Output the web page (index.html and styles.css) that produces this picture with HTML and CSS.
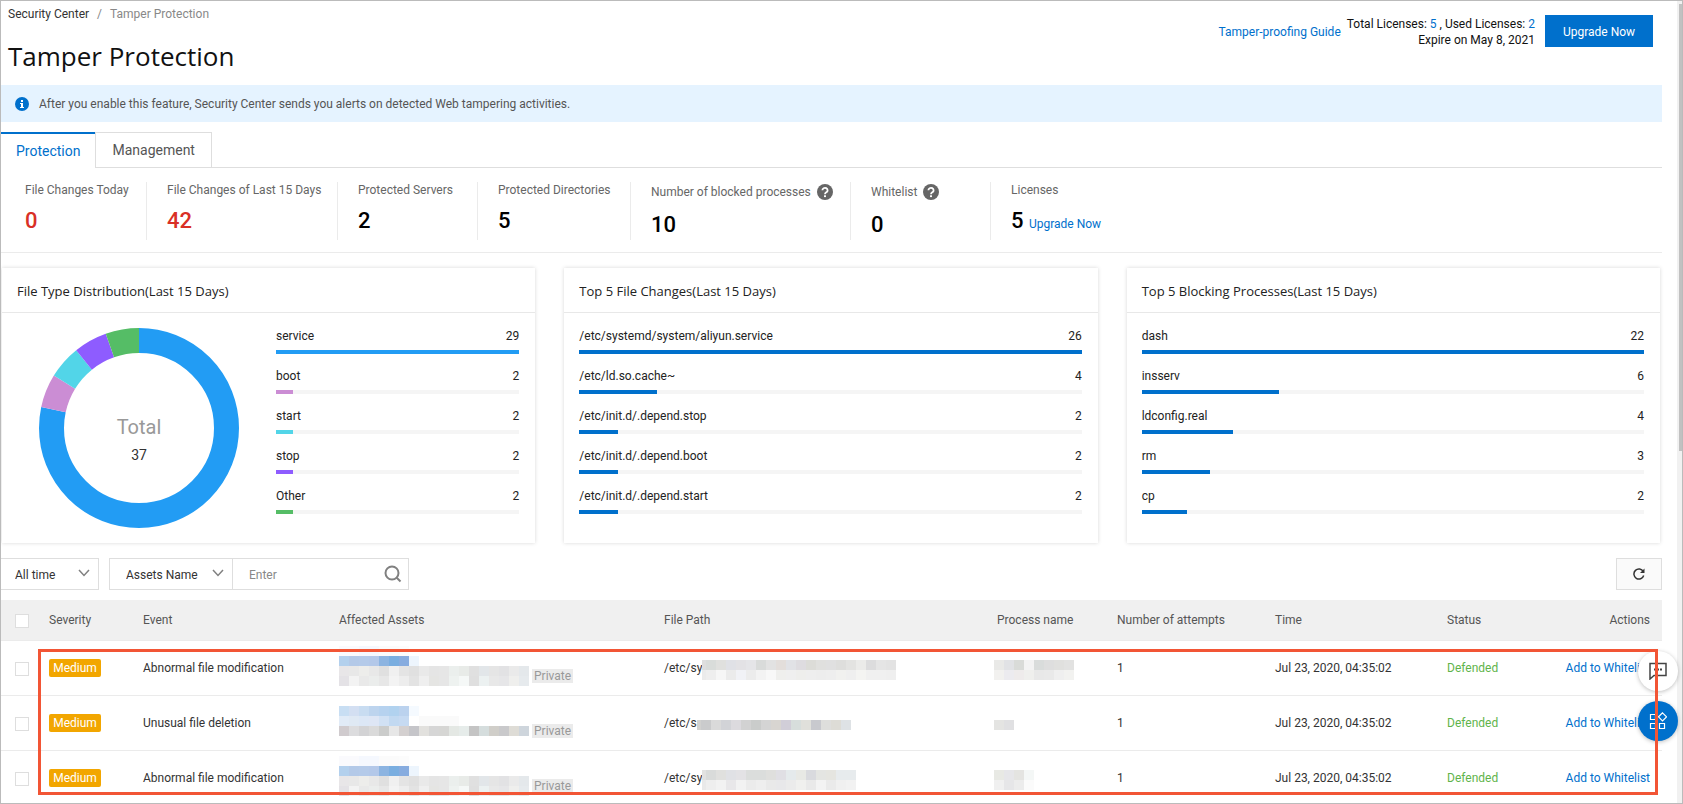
FILE: index.html
```
<!DOCTYPE html>
<html lang="en">
<head>
    <meta charset="UTF-8">
    <meta name="viewport" content="width=device-width, initial-scale=1.0">
    <title>Tamper Protection</title>
    <link rel="stylesheet" href="styles.css">
</head>
<body>

    <div class="page">
        <main class="content">
            <!-- Page header -->
            <header class="page-header">
                <div class="heading">
                    <nav class="breadcrumb">
                        <a href="#">Security Center</a>
                        <span class="sep">/</span>
                        <span>Tamper Protection</span>
                    </nav>
                    <h1>Tamper Protection</h1>
                </div>
                <div class="license">
                    <a href="#">Tamper-proofing Guide</a>
                    <p class="license-info">
                        Total Licenses: <a href="#">5</a> , Used Licenses: <a href="#">2</a><br>
                        Expire on May 8, 2021
                    </p>
                    <button class="upgrade-button">Upgrade Now</button>
                </div>
            </header>

            <div class="notice">
                <svg width="14" height="14" viewBox="0 0 14 14">
                    <circle cx="7" cy="7" r="7" fill="#0070cc"/>
                    <rect x="6" y="3" width="2" height="2" fill="#fff"/>
                    <path d="M5 6h3v4h1v1H5v-1h1V7H5z" fill="#fff"/>
                </svg>
                After you enable this feature, Security Center sends you alerts on detected Web tampering activities.
            </div>

            <div class="tabs">
                <button class="tab active">Protection</button>
                <button class="tab">Management</button>
            </div>

            <!-- Key figures -->
            <section class="stats">
                <div class="stat">
                    <div class="stat-label">File Changes Today</div>
                    <div class="stat-value red">0</div>
                </div>
                <div class="stat">
                    <div class="stat-label">File Changes of Last 15 Days</div>
                    <div class="stat-value red">42</div>
                </div>
                <div class="stat">
                    <div class="stat-label">Protected Servers</div>
                    <div class="stat-value">2</div>
                </div>
                <div class="stat">
                    <div class="stat-label">Protected Directories</div>
                    <div class="stat-value">5</div>
                </div>
                <div class="stat">
                    <div class="stat-label with-help">Number of blocked processes
                        <svg class="help" width="16" height="16" viewBox="0 0 16 16">
                            <circle cx="8" cy="8" r="8" fill="#666"/>
                            <path d="M5.4 6.3a2.6 2.4 0 1 1 4 2C8.500 8.900 8 9.200 8 10.300" fill="none" stroke="#fff" stroke-width="1.800"/>
                            <rect x="7" y="11.300" width="2" height="1.800" fill="#fff"/>
                        </svg>
                    </div>
                    <div class="stat-value">10</div>
                </div>
                <div class="stat">
                    <div class="stat-label with-help">Whitelist
                        <svg class="help" width="16" height="16" viewBox="0 0 16 16">
                            <circle cx="8" cy="8" r="8" fill="#666"/>
                            <path d="M5.4 6.3a2.6 2.4 0 1 1 4 2C8.500 8.900 8 9.200 8 10.300" fill="none" stroke="#fff" stroke-width="1.800"/>
                            <rect x="7" y="11.300" width="2" height="1.800" fill="#fff"/>
                        </svg>
                    </div>
                    <div class="stat-value">0</div>
                </div>
                <div class="stat">
                    <div class="stat-label">Licenses</div>
                    <div class="stat-value">5 <a href="#">Upgrade Now</a></div>
                </div>
            </section>

            <!-- Charts -->
            <section class="cards">
                <article class="card">
                    <h2>File Type Distribution(Last 15 Days)</h2>
                    <div class="card-body">
                        <div class="donut">
                            <!-- pathLength 37 = total number of files -->
                            <svg viewBox="0 0 200 200" fill="none" stroke-width="25">
                                <g transform="rotate(-90 100 100)">
                                    <circle cx="100" cy="100" r="87.5" pathLength="37" stroke="#229cf4" stroke-dasharray="29 8"/>
                                    <circle cx="100" cy="100" r="87.5" pathLength="37" stroke="#cb8dd4" stroke-dasharray="2 35" stroke-dashoffset="-29"/>
                                    <circle cx="100" cy="100" r="87.5" pathLength="37" stroke="#52d5e8" stroke-dasharray="2 35" stroke-dashoffset="-31"/>
                                    <circle cx="100" cy="100" r="87.5" pathLength="37" stroke="#8e5cff" stroke-dasharray="2 35" stroke-dashoffset="-33"/>
                                    <circle cx="100" cy="100" r="87.5" pathLength="37" stroke="#55bd66" stroke-dasharray="2 35" stroke-dashoffset="-35"/>
                                </g>
                            </svg>
                            <div class="donut-text">
                                <span class="donut-title">Total</span>
                                <span class="donut-value">37</span>
                            </div>
                        </div>
                        <ul class="bars">
                            <li><span>service</span><span>29</span><i class="track"><b class="c-service" style="width: 100%"></b></i></li>
                            <li><span>boot</span><span>2</span><i class="track"><b class="c-boot" style="width: 6.9%"></b></i></li>
                            <li><span>start</span><span>2</span><i class="track"><b class="c-start" style="width: 6.9%"></b></i></li>
                            <li><span>stop</span><span>2</span><i class="track"><b class="c-stop" style="width: 6.9%"></b></i></li>
                            <li><span>Other</span><span>2</span><i class="track"><b class="c-other" style="width: 6.9%"></b></i></li>
                        </ul>
                    </div>
                </article>

                <article class="card">
                    <h2>Top 5 File Changes(Last 15 Days)</h2>
                    <div class="card-body">
                        <ul class="bars">
                            <li><span>/etc/systemd/system/aliyun.service</span><span>26</span><i class="track"><b style="width: 100%"></b></i></li>
                            <li><span>/etc/ld.so.cache~</span><span>4</span><i class="track"><b style="width: 15.500%"></b></i></li>
                            <li><span>/etc/init.d/.depend.stop</span><span>2</span><i class="track"><b style="width: 7.700%"></b></i></li>
                            <li><span>/etc/init.d/.depend.boot</span><span>2</span><i class="track"><b style="width: 7.700%"></b></i></li>
                            <li><span>/etc/init.d/.depend.start</span><span>2</span><i class="track"><b style="width: 7.700%"></b></i></li>
                        </ul>
                    </div>
                </article>

                <article class="card">
                    <h2>Top 5 Blocking Processes(Last 15 Days)</h2>
                    <div class="card-body">
                        <ul class="bars">
                            <li><span>dash</span><span>22</span><i class="track"><b style="width: 100%"></b></i></li>
                            <li><span>insserv</span><span>6</span><i class="track"><b style="width: 27.300%"></b></i></li>
                            <li><span>ldconfig.real</span><span>4</span><i class="track"><b style="width: 18.200%"></b></i></li>
                            <li><span>rm</span><span>3</span><i class="track"><b style="width: 13.600%"></b></i></li>
                            <li><span>cp</span><span>2</span><i class="track"><b style="width: 9%"></b></i></li>
                        </ul>
                    </div>
                </article>
            </section>

            <!-- Filters -->
            <form class="filters">
                <div class="select time-select">
                    <select aria-label="Time range"><option>All time</option></select>
                    <svg width="12" height="8" viewBox="0 0 12 8"><path d="M1 1l5 5.500L11 1" fill="none" stroke="#808080" stroke-width="1.500"/></svg>
                </div>
                <div class="select name-select">
                    <select aria-label="Search by"><option>Assets Name</option></select>
                    <svg width="12" height="8" viewBox="0 0 12 8"><path d="M1 1l5 5.500L11 1" fill="none" stroke="#808080" stroke-width="1.500"/></svg>
                </div>
                <div class="search">
                    <input type="text" placeholder="Enter" aria-label="Search">
                    <svg width="18" height="18" viewBox="0 0 18 18" fill="none" stroke="#808080" stroke-width="2"><circle cx="8" cy="8" r="6.500"/><path d="M12.500 12.500l4 4"/></svg>
                </div>
                <button type="button" class="refresh" aria-label="Refresh">
                    <svg width="12" height="12" viewBox="0 0 12 12"><path d="M10.300 3.600A5 5 0 1 0 10.700 7.500" fill="none" stroke="#333" stroke-width="1.500"/><path d="M11.500 0.500v4.500H7z" fill="#333"/></svg>
                </button>
            </form>

            <!-- Alerts -->
            <div class="alerts">
                <table>
                    <colgroup>
                        <col class="col-check"><col class="col-severity"><col class="col-event"><col class="col-assets"><col class="col-path"><col class="col-process"><col class="col-attempts"><col class="col-time"><col class="col-status"><col>
                    </colgroup>
                    <thead>
                        <tr>
                            <th class="check"><input type="checkbox" aria-label="Select all"></th>
                            <th>Severity</th>
                            <th>Event</th>
                            <th>Affected Assets</th>
                            <th>File Path</th>
                            <th>Process name</th>
                            <th>Number of attempts</th>
                            <th>Time</th>
                            <th>Status</th>
                            <th class="actions">Actions</th>
                        </tr>
                    </thead>
                    <tbody>
                        <tr>
                            <td class="check"><input type="checkbox" aria-label="Select alert 1"></td>
                            <td><span class="badge">Medium</span></td>
                            <td>Abnormal file modification</td>
                            <td class="assets"><div class="masked"><span data-mosaic="assetA"></span><span class="tag">Private</span></div></td>
                            <td class="path"><div class="masked">/etc/sy<span class="cut" data-mosaic="pathA"></span></div></td>
                            <td class="process"><div class="masked"><span data-mosaic="processA"></span></div></td>
                            <td>1</td>
                            <td>Jul 23, 2020, 04:35:02</td>
                            <td class="defended">Defended</td>
                            <td class="actions"><a href="#">Add to Whitelist</a></td>
                        </tr>
                        <tr>
                            <td class="check"><input type="checkbox" aria-label="Select alert 2"></td>
                            <td><span class="badge">Medium</span></td>
                            <td>Unusual file deletion</td>
                            <td class="assets"><div class="masked"><span data-mosaic="assetB"></span><span class="tag">Private</span></div></td>
                            <td class="path"><div class="masked">/etc/s<span class="cut" data-mosaic="pathB"></span></div></td>
                            <td class="process"><div class="masked"><span data-mosaic="processB"></span></div></td>
                            <td>1</td>
                            <td>Jul 23, 2020, 04:35:02</td>
                            <td class="defended">Defended</td>
                            <td class="actions"><a href="#">Add to Whitelist</a></td>
                        </tr>
                        <tr>
                            <td class="check"><input type="checkbox" aria-label="Select alert 3"></td>
                            <td><span class="badge">Medium</span></td>
                            <td>Abnormal file modification</td>
                            <td class="assets"><div class="masked"><span data-mosaic="assetA"></span><span class="tag">Private</span></div></td>
                            <td class="path"><div class="masked">/etc/sy<span class="cut" data-mosaic="pathC"></span></div></td>
                            <td class="process"><div class="masked"><span data-mosaic="processC"></span></div></td>
                            <td>1</td>
                            <td>Jul 23, 2020, 04:35:02</td>
                            <td class="defended">Defended</td>
                            <td class="actions"><a href="#">Add to Whitelist</a></td>
                        </tr>
                    </tbody>
                </table>
                <div class="highlight"></div>
            </div>
        </main>

        <div class="scrollbar"><div class="thumb"></div></div>

        <!-- Floating buttons -->
        <div class="floating">
            <button class="float-button" aria-label="Feedback">
                <svg width="18" height="18" viewBox="0 0 18 18"><path d="M1 17V1.500h16v12H5z" fill="none" stroke="#444" stroke-width="1.500"/><path d="M5 6.500h2v2H5zM8 6.500h2v2H8zM11 6.500h2v2h-2z" fill="#444"/></svg>
            </button>
            <button class="float-button blue" aria-label="Products">
                <svg width="18" height="18" viewBox="0 0 18 18" fill="none" stroke="#fff" stroke-width="1.200"><path d="M1.500 2.500h5v5h-5zM1.500 11.500h5v5h-5zM10.500 11.500h5v5h-5zM13.500 .8l4 4-4 4-4-4z"/></svg>
            </button>
        </div>
    </div>

    <script src="mosaic.js"></script>
</body>
</html>
```
FILE: styles.css
```
* {
    box-sizing: border-box;
}

body {
    margin: 0;
    font-family: Roboto, "Open Sans", sans-serif;
    font-size: 12px;
    line-height: 16px;
    color: #333;
    background: #fff;
}

a {
    color: #0070cc;
    text-decoration: none;
}

button, input, select {
    font: inherit;
    color: inherit;
}

h1, h2, p, ul {
    margin: 0;
    padding: 0;
    font-weight: normal;
}

h1, h2 {
    font-family: "Open Sans", sans-serif;
}

.page {
    position: relative;
    display: flex;
    height: 100vh;
    border: 1px solid #bbb;
    overflow: hidden;
}

.content {
    flex: 1;
    min-width: 0;
    padding-right: 15px;
}

.scrollbar {
    width: 5px;
    padding: 3px 0 0 2px;
    background: #f1f1f1;
}

.thumb {
    height: 56%;
    background: #c1c1c1;
}

/* Header */
.page-header {
    display: flex;
    justify-content: space-between;
    height: 84px;
    padding: 5px 9px 0 7px;
}

.breadcrumb {
    display: flex;
    gap: 8px;
    color: #888;
}

.breadcrumb a {
    color: #333;
}

h1 {
    margin-top: 14px;
    font-size: 26px;
    line-height: 40px;
    color: #111;
}

.license {
    display: flex;
    align-items: center;
    gap: 6px;
    height: 50px;
}

.license a,
.license-info {
    margin-top: 2px;
}

.license-info {
    text-align: right;
    color: #111;
}

.upgrade-button {
    width: 108px;
    height: 32px;
    margin-left: 4px;
    padding: 2px 0 0;
    border: none;
    background: #0070cc;
    color: #fff;
}

.notice {
    display: flex;
    align-items: center;
    gap: 10px;
    height: 37px;
    padding-left: 14px;
    background: #e5f3ff;
    color: #555;
}

/* Tabs */
.tabs {
    display: flex;
    height: 36px;
    margin-top: 10px;
    border-bottom: 1px solid #dedede;
}

.tab {
    height: 36px;
    padding: 0 16px;
    border: 1px solid #dedede;
    background: #fff;
    font-size: 14px;
    color: #555;
}

.tab.active {
    padding: 0 15px;
    border-width: 2px 0 0;
    border-color: #0070cc;
    color: #0070cc;
}

/* Stats */
.stats {
    display: grid;
    grid-template-columns: 146px 191px 140px 153px 220px 140px 1fr;
    height: 85px;
    padding: 14px 0;
    border-bottom: 1px solid #ebebeb;
}

.stat {
    padding-left: 20px;
    border-right: 1px solid #ebebeb;
    white-space: nowrap;
}

.stat:first-child {
    padding-left: 24px;
}

.stat:last-child {
    border-right: none;
}

.stat-label {
    color: #666;
}

.with-help {
    display: flex;
    align-items: center;
    gap: 6px;
    height: 20px;
}

.stat-value {
    margin-top: 8px;
    font-size: 22px;
    font-weight: 500;
    line-height: 30px;
    color: #000;
}

.stat-value.red {
    color: #d93026;
}

.stat-value a {
    font-size: 12px;
    font-weight: normal;
}

/* Cards */
.cards {
    display: grid;
    grid-template-columns: repeat(3, 1fr);
    gap: 29px;
    padding: 15px 2px 0 1px;
}

.card {
    height: 275px;
    background: #fff;
    box-shadow: 0 0 4px rgba(0, 0, 0, 0.16);
}

.card h2 {
    height: 45px;
    padding-left: 15px;
    border-bottom: 1px solid #e8e8e8;
    font-size: 13px;
    line-height: 46px;
    color: #222;
}

.card-body {
    display: flex;
    gap: 37px;
    padding: 14px 16px 0 15px;
}

.donut {
    position: relative;
    flex: none;
    width: 200px;
    height: 200px;
    margin: 1px 0 0 22px;
}

.donut-text {
    position: absolute;
    inset: 0;
    display: flex;
    flex-direction: column;
    align-items: center;
    justify-content: center;
    padding-top: 22px;
}

.donut-title {
    font-size: 20px;
    line-height: 32px;
    color: #999;
}

.donut-value {
    font-size: 14px;
    line-height: 24px;
    color: #333;
}

.bars {
    flex: 1;
    list-style: none;
    color: #222;
}

.bars li {
    display: flex;
    flex-wrap: wrap;
    align-content: flex-start;
    justify-content: space-between;
    height: 40px;
    line-height: 18px;
}

.track {
    width: 100%;
    height: 4px;
    margin-top: 5px;
    background: #f5f5f5;
}

.track b {
    display: block;
    height: 4px;
    background: #0070cc;
}

.track .c-service { background: #229cf4; }
.track .c-boot { background: #cb8dd4; }
.track .c-start { background: #52d5e8; }
.track .c-stop { background: #8e5cff; }
.track .c-other { background: #55bd66; }

/* Filters */
.filters {
    display: flex;
    margin-top: 15px;
    height: 32px;
}

.select, .search {
    position: relative;
}

.select select, .search input {
    width: 100%;
    height: 32px;
    padding: 2px 0 0 16px;
    border: 1px solid #dedede;
    border-radius: 0;
    background: #fff;
    appearance: none;
    outline: none;
}

.time-select {
    width: 98px;
    margin-right: 10px;
}

.time-select select {
    padding-left: 14px;
    border-left: none;
}

.name-select {
    width: 124px;
}

.select svg {
    position: absolute;
    right: 9px;
    top: 11px;
    pointer-events: none;
}

.search {
    width: 176px;
}

.search input {
    padding-right: 36px;
    border-left: none;
}

.search input::placeholder {
    color: #888;
}

.search svg {
    position: absolute;
    right: 7px;
    top: 7px;
}

.refresh {
    width: 46px;
    margin-left: auto;
    padding: 0;
    border: 1px solid #dedede;
    background: #fafafa;
}

.refresh svg {
    display: block;
    margin: 0 auto;
}

/* Alerts table */
.alerts {
    position: relative;
    margin-top: 10px;
}

table {
    width: 100%;
    border-collapse: separate;
    border-spacing: 0;
    table-layout: fixed;
}

.col-check { width: 48px; }
.col-severity { width: 94px; }
.col-event { width: 196px; }
.col-assets { width: 325px; }
.col-path { width: 333px; }
.col-process { width: 120px; }
.col-attempts { width: 158px; }
.col-time { width: 172px; }
.col-status { width: 110px; }

th, td {
    padding: 0;
    border-bottom: 1px solid #ebebeb;
    text-align: left;
    font-weight: normal;
    white-space: nowrap;
}

th {
    height: 41px;
    background: #f0f0f0;
    color: #555;
}

td {
    height: 55px;
}

.check {
    padding-left: 14px;
}

.check input {
    display: block;
    width: 14px;
    height: 14px;
    margin: 2px 0 0;
    border: 1px solid #dedede;
    background: #fff;
    appearance: none;
}

.actions {
    padding-right: 12px;
    text-align: right;
}

.defended {
    color: #5fb44b;
}

.badge {
    display: inline-block;
    width: 52px;
    height: 18px;
    border-radius: 2px;
    background: #f2a600;
    line-height: 18px;
    text-align: center;
    color: #fff;
}

.masked {
    display: flex;
    align-items: center;
}

.masked svg {
    display: block;
}

.assets {
    padding-top: 5px;
    vertical-align: top;
}

.assets .masked {
    height: 40px;
}

.tag {
    margin: 20px 0 0 3px;
    padding: 0 2px;
    background: #ebebeb;
    line-height: 14px;
    color: #999;
}

.path span,
.process span {
    margin-top: 4px;
}

/* the first block of a path is narrower than the others */
.path .cut {
    overflow: hidden;
}

.path .cut svg {
    margin-left: -6px;
}

.process .masked {
    margin-left: -3px;
}

.highlight {
    position: absolute;
    top: 49px;
    left: 37px;
    right: 4px;
    z-index: 2;
    height: 146px;
    border: 3px solid #f25535;
    pointer-events: none;
}

/* Floating buttons */
.floating {
    position: absolute;
    right: 4px;
    top: 650px;
    display: flex;
    flex-direction: column;
    gap: 10px;
    z-index: 1;
}

.float-button {
    display: flex;
    align-items: center;
    justify-content: center;
    width: 40px;
    height: 40px;
    padding: 0;
    border: none;
    border-radius: 50%;
    background: #fff;
    box-shadow: 0 1px 4px rgba(0, 0, 0, 0.25);
}

.float-button.blue {
    background: #0070cc;
}
```
FILE: mosaic.js
```
// Pixelated blocks that hide private data. One array item per row,
// one colour per 10px cell, "." leaves a cell empty.
const CELL = 10;

const mosaics = {
    assetA: [
        "fafafd fafafd f5f8fe f5f8fe fbfbfb fbfbfb fcfcfc . . . . . . . . . . . .",
        "b3d0ed b3c9e8 b4cae9 b3c8e9 8cb4e1 7aaee0 87acdf edf5fd . . . . . . . . . . .",
        "e8e6e8 e8e8e8 ededeb e8e8e8 e0e0e0 f0f0f0 e4e4e4 e0e0e0 e9e9e9 e5e5e5 e6e6e6 ebefed e8ebe8 e0e0e0 e2e6e9 e5e5e5 e2e2e4 eaeaea e4e8eb",
        "e4e2e6 f3f3f3 e9e9e9 ebedec e7e7e7 f3f3f3 ededed e3e3e3 efefef e5e5e3 e6e6e6 eef2f0 f5f8f7 dfdfdf ecf1f1 e8e8e8 e6e6e8 efefed e6eaed"
    ],
    assetB: [
        "c8def3 d3dff2 c8dcf1 bdd4ee b6d2ef b1d2ef bbd2ee f5faff . . . . . . . . . . .",
        "e1ebf7 dfe9f4 dce7f6 dee6f5 d1e1f4 c2d9f1 c6daf2 . fafafa fafafa fafafa fafafa . . . . . . .",
        "d0cbce dcdcde d3d3d5 dadada cbcccb e7e7e7 d4d0d0 c5c5c9 e2e1de d6d6d6 d6d6d4 e4e8e4 e6ecea c4c4c4 d5dddd d0cec9 c9c9cb dedcd6 ced5dc"
    ],
    pathA: [
        "dedede d9dcda e0e0de e0e1e6 e3e2e5 e5e5e8 d9dbda e2e2e2 e3dedb e1e2e6 dedce0 dcdcd8 e0e0de e0e0e0 dededc e3e3e1 ebebe9 dcdcdd e5e5e5 e3e3e3",
        "ebebeb eeeeee f6f6f6 ebebeb f1f2f6 ececec f3f3f3 f8f8f8 efefed efefef eeeeec eeeeee ededed eeeeee f1f1ef efefef f4f4f2 f0f0f0 f0f0f0 efefef"
    ],
    pathB: [
        "d1d1cf cacbcc dadada d2d3d7 dcdade d2d2d2 cacccb d4d4d4 d8d5d1 d1ced8 d7dedc e0e0db c8c9ce dededc dddcd6 dee2e5"
    ],
    pathC: [
        "e2e2e1 d9dbda e0e0de e0e1e5 e3e2e5 dbdddc dbdddc dfdfdd e0dfe4 e5eaec e8e9e5 d9dade e4e5e2 e5e5e0 e7ebed e7ebed",
        "e9e9e9 eeeeee f2f2f2 e8e7e9 f2f2f2 ebebeb eeeeee e9e9e9 e8e8ea ebebeb f0f0ee e9e9e9 f3f3f3 eaeaea f0f0f0 f2f2f2"
    ],
    processA: [
        "e9e9e7 e1e2e5 d9dbd8 f3f3f3 d9dcdb dedede e0e0de e2e2e1",
        "f2f1ef ecebef eeebeb efefed e8e8e8 e9e9e9 efefef f2f2f0"
    ],
    processB: [
        "e4e4e2 e0e0e2"
    ],
    processC: [
        "e8e9e4 e6e6e9 e4e4e1 f4f7f6",
        "f0f0f0 e6e6e8 ececec fbfbfb"
    ]
};

document.querySelectorAll("[data-mosaic]").forEach(el => {
    const rows = mosaics[el.dataset.mosaic].map(row => row.split(" "));
    const width = Math.max(...rows.map(row => row.length)) * CELL;
    const height = rows.length * CELL;
    let rects = "";
    rows.forEach((row, y) => {
        row.forEach((color, x) => {
            if (color !== ".") {
                rects += `<rect x="${x * CELL}" y="${y * CELL}" width="${CELL}" height="${CELL}" fill="#${color}"/>`;
            }
        });
    });
    el.innerHTML = `<svg width="${width}" height="${height}" shape-rendering="crispEdges">${rects}</svg>`;
});
```
